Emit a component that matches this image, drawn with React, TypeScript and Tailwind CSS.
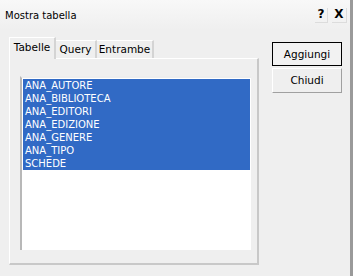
import React from "react";

const items = [
  "ANA_AUTORE",
  "ANA_BIBLIOTECA",
  "ANA_EDITORI",
  "ANA_EDIZIONE",
  "ANA_GENERE",
  "ANA_TIPO",
  "SCHEDE",
];

export default function App() {
  return (
    <div
      className="w-[353px] h-[276px] bg-[#efefef] text-black text-[10px] leading-[13px] flex flex-col border-r-[3px] border-r-[#9a9a9a] overflow-hidden"
      style={{ fontFamily: "'DejaVu Sans', Verdana, sans-serif" }}
    >
      {/* Title bar */}
      <div className="h-[30px] flex items-center pl-[5px] pr-[3px] bg-gradient-to-b from-[#f8f8f8] to-[#efefef]">
        <span className="flex-1 text-[10px]">Mostra tabella</span>
        <div className="flex gap-[4px]">
          <div className="w-[13px] h-[15px] flex items-center justify-center font-bold text-[12px] border-r border-b border-[#dcdcdc]">?</div>
          <div className="w-[15px] h-[15px] flex items-center justify-center font-bold text-[12px] border-r border-b border-[#dcdcdc]">X</div>
        </div>
      </div>

      <div className="flex flex-1">
        {/* Left: tabs + panel */}
        <div className="pl-[9px] pt-[7px] flex flex-col">
          <div className="flex items-end h-[21px] text-[10.5px]">
            <div className="h-[22px] w-[47px] -mb-[1px] relative z-10 bg-[#efefef] border-t border-l border-white border-r-2 border-r-[#d4d4d4] flex items-center justify-center pb-[2px]">
              Tabelle
            </div>
            <div className="h-[18px] w-[41px] border-t border-white border-r-2 border-r-[#d4d4d4] flex items-center justify-center">
              Query
            </div>
            <div className="h-[18px] w-[57px] border-t border-white border-r-2 border-r-[#d4d4d4] flex items-center justify-center">
              Entrambe
            </div>
          </div>
          <div className="w-[250px] h-[207px] border-t border-l border-white border-r-2 border-b-2 border-r-[#c8c8c8] border-b-[#c8c8c8] pl-[10px] pt-[17px]">
            <div className="w-[231px] h-[174px] bg-white border-l-2 border-t-2 border-l-[#b8b8b8] border-t-[#ededed] pl-[1px] pt-[1px]">
              <div className="w-[227px] bg-[#316ac5] text-white">
                {items.map((t) => (
                  <div key={t} className="h-[13px] pl-[2px] leading-[13px]">
                    {t}
                  </div>
                ))}
              </div>
            </div>
          </div>
        </div>

        {/* Right: buttons */}
        <div className="pl-[13px] pt-[12px] flex flex-col gap-[2px] text-[10.5px]">
          <div className="w-[70px] h-[24px] border border-black flex items-center justify-center bg-[#f2f2f2]">
            Aggiungi
          </div>
          <div className="w-[70px] h-[25px] border-t border-l border-white border-r border-b border-r-[#a0a0a0] border-b-[#a0a0a0] flex items-center justify-center">
            Chiudi
          </div>
        </div>
      </div>
    </div>
  );
}
